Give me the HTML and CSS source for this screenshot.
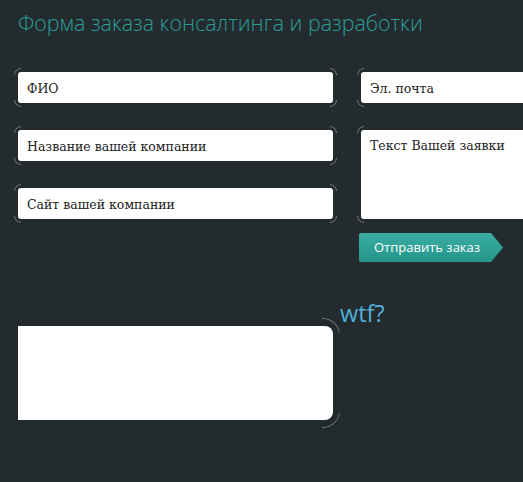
FILE: index.html
```html
<!DOCTYPE html>
<html lang="ru">
<head>
<meta charset="utf-8">
<title>Форма заказа</title>
<link rel="stylesheet" href="styles.css">
</head>
<body>
<div class="page">
  <h1 class="title">Форма заказа консалтинга и разработки</h1>
  <form class="order-form">
    <div class="col">
      <div class="field"><input class="input" type="text" placeholder="ФИО"></div>
      <div class="field"><input class="input" type="text" placeholder="Название вашей компании"></div>
      <div class="field"><input class="input" type="text" placeholder="Сайт вашей компании"></div>
    </div>
    <div class="col col-right">
      <div class="field"><input class="input" type="text" placeholder="Эл. почта"></div>
      <div class="field field-tall"><textarea class="input area" placeholder="Текст Вашей заявки"></textarea></div>
      <button class="submit" type="button">Отправить заказ</button>
    </div>
  </form>
  <div class="result">
    <div class="result-box"></div>
    <span class="wtf">wtf?</span>
  </div>
</div>
</body>
</html>
```
FILE: styles.css
```css
html, body {
  margin: 0;
  padding: 0;
  background: #242b2f;
  overflow: hidden;
}
.page {
  box-sizing: border-box;
  width: 100%;
  height: 482px;
  padding-left: 18px;
  overflow: hidden;
}
.title {
  margin: 0;
  padding-top: 8px;
  font-family: "Open Sans", sans-serif;
  font-weight: 300;
  font-size: 21.4px;
  line-height: 30px;
  color: #2a9e96;
  white-space: nowrap;
}
.order-form {
  display: flex;
  gap: 28px;
  margin-top: 34px;
}
.col {
  display: flex;
  flex-direction: column;
  gap: 27px;
  width: 315px;
  flex: none;
}
.field {
  position: relative;
  height: 31px;
}
.field::before {
  content: "";
  position: absolute;
  inset: -4px;
  border: 1px solid rgba(200, 205, 208, 0.55);
  border-radius: 7px;
  -webkit-mask:
    linear-gradient(#000 0 0) left top / 7px 7px no-repeat,
    linear-gradient(#000 0 0) right top / 7px 7px no-repeat,
    linear-gradient(#000 0 0) left bottom / 7px 7px no-repeat,
    linear-gradient(#000 0 0) right bottom / 7px 7px no-repeat;
  mask:
    linear-gradient(#000 0 0) left top / 7px 7px no-repeat,
    linear-gradient(#000 0 0) right top / 7px 7px no-repeat,
    linear-gradient(#000 0 0) left bottom / 7px 7px no-repeat,
    linear-gradient(#000 0 0) right bottom / 7px 7px no-repeat;
}
.field-tall {
  height: 89px;
  margin-bottom: -13px;
}
.input {
  position: relative;
  display: block;
  box-sizing: border-box;
  width: 100%;
  height: 100%;
  margin: 0;
  border: 0;
  border-radius: 3px;
  background: #fff;
  padding: 1px 9px 0;
  font-family: "DejaVu Serif", "Liberation Serif", serif;
  font-size: 12.5px;
  color: #222;
  outline: none;
}
.input::placeholder {
  color: #222;
  opacity: 1;
}
.area {
  resize: none;
  padding-top: 8px;
}
.submit {
  align-self: flex-start;
  margin-left: -2px;
  width: 144px;
  height: 29px;
  border: 0;
  padding: 0 0 1px 15px;
  text-align: left;
  font-family: "Open Sans", sans-serif;
  font-size: 13px;
  color: #fff;
  background: linear-gradient(#3cafa3, #22948a);
  border-radius: 2px 0 0 2px;
  clip-path: polygon(0 0, 132px 0, 100% 50%, 132px 100%, 0 100%);
}
.result {
  position: relative;
  margin-top: 55px;
  width: 331px;
  height: 140px;
  background: #222a2e;
}
.result-box {
  position: relative;
  top: 9px;
  width: 315px;
  height: 94px;
  background: #fff;
  border-radius: 0 8px 8px 0;
}
.result-box::before {
  content: "";
  position: absolute;
  top: -8px;
  bottom: -8px;
  right: -7px;
  width: 30px;
  border: 1px solid rgba(200, 205, 208, 0.5);
  border-left: 0;
  border-radius: 0 17px 17px 0;
  -webkit-mask:
    linear-gradient(#000 0 0) right top / 18px 15px no-repeat,
    linear-gradient(#000 0 0) right bottom / 18px 15px no-repeat;
  mask:
    linear-gradient(#000 0 0) right top / 18px 15px no-repeat,
    linear-gradient(#000 0 0) right bottom / 18px 15px no-repeat;
}
.wtf {
  position: absolute;
  left: 322px;
  top: -19px;
  font-family: "Open Sans", sans-serif;
  font-size: 23.5px;
  line-height: 30px;
  color: #4fb1d8;
}
```
